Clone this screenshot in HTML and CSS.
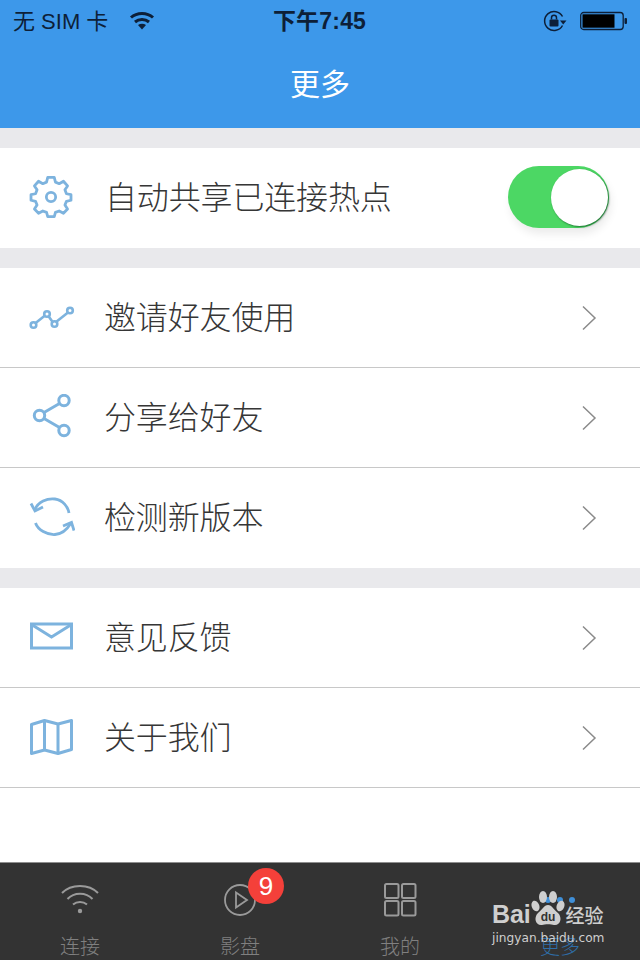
FILE: index.html
```html
<!DOCTYPE html>
<html lang="zh">
<head>
<meta charset="utf-8">
<title>更多</title>
<link rel="stylesheet" href="styles.css">
</head>
<body>
<div class="screen">
  <header class="header">
    <div class="status">
      <div class="status-left">
        <span>无 SIM 卡</span>
        <svg class="wifi-small" width="26" height="20" viewBox="0 0 26 20"><g fill="none" stroke="#0d1f38" stroke-width="3"><path d="M2 7.500C8 2 18 2 24 7.500"/><path d="M6 12C10 8.500 16 8.500 20 12"/></g><path d="M9 15C11.500 13.400 14.500 13.400 17 15L13 19.500Z" fill="#0d1f38"/></svg>
      </div>
      <div class="status-time">下午7:45</div>
      <div class="status-right">
        <svg width="24" height="24" viewBox="0 0 24 24"><path d="M19.500 7.500A9.500 9.500 0 1 0 19.500 16.500" fill="none" stroke="#0d1f38" stroke-width="1.500"/><path d="M17 11.500H23.500L20.200 15.500Z" fill="#0d1f38"/><rect x="6.500" y="10.500" width="9" height="7" rx="1" fill="#0d1f38"/><path d="M8.500 10.500V8.800a2.500 2.500 0 0 1 5 0V10.500" fill="none" stroke="#0d1f38" stroke-width="1.500"/></svg>
        <svg width="48" height="20" viewBox="0 0 48 20"><rect x=".7" y="1.500" width="42.500" height="17" rx="3" fill="none" stroke="#0d1f38" stroke-width="1.300"/><rect x="2.500" y="3.300" width="32" height="13.400" fill="#000"/><rect x="44.500" y="7" width="2.500" height="6" rx="1" fill="#0d1f38"/></svg>
      </div>
    </div>
    <h1 class="title">更多</h1>
  </header>

  <main class="content">
    <section class="group">
      <div class="row row-switch">
        <svg class="icon icon-up" width="48" height="48" viewBox="0 0 48 48"><g transform="translate(24 24) scale(.93) translate(-24 -24)" fill="none" stroke="#7db3de" stroke-width="3" stroke-linejoin="round"><path d="M20.500 3H27.500L28.800 8L32.800 9.700L37.400 7.100L41.800 12.100L39 16.300L40.600 20.500L45.500 21.500V27.500L40.600 28.700L39 32.700L41.800 37L37.400 41.500L32.800 39L28.800 40.500L27.500 45H20.500L19.200 40.500L15.200 39L10.600 41.500L6.200 37L9 32.700L7.400 28.700L2.500 27.500V21.500L7.400 20.500L9 16.300L6.200 12.100L10.600 7.100L15.200 9.700L19.200 8Z"/><circle cx="24" cy="24" r="5"/></g></svg>
        <span class="label label-first">自动共享已连接热点</span>
        <div class="switch"><div class="knob"></div></div>
      </div>
    </section>

    <section class="group">
      <div class="row">
        <svg class="icon" width="48" height="48" viewBox="0 0 48 48"><g fill="none" stroke="#7db3de" stroke-width="2.600"><path d="M8 29.500L18 21.500M21 21.500L26 28.500M29 28L41 18.500"/><circle cx="6.500" cy="31" r="2.800"/><circle cx="20" cy="20" r="2.800"/><circle cx="27.500" cy="30" r="2.800"/><circle cx="43" cy="16.500" r="2.800"/></g></svg>
        <span class="label">邀请好友使用</span>
        <svg class="chev" width="16" height="26" viewBox="0 0 16 26"><path d="M2 1.500L14 13L2 24.500" fill="none" stroke="#8a8a8a" stroke-width="1.500"/></svg>
      </div>
      <div class="row">
        <svg class="icon" width="48" height="48" viewBox="0 0 48 48"><g fill="none" stroke="#7db3de" stroke-width="3"><circle cx="37" cy="6.500" r="5.200"/><circle cx="12.500" cy="21.500" r="5.200"/><circle cx="37" cy="36.500" r="5.200"/><path d="M17 18.500L32.500 9.500M17 24.500L32.500 33.500"/></g></svg>
        <span class="label">分享给好友</span>
        <svg class="chev" width="16" height="26" viewBox="0 0 16 26"><path d="M2 1.500L14 13L2 24.500" fill="none" stroke="#8a8a8a" stroke-width="1.500"/></svg>
      </div>
      <div class="row">
        <svg class="icon" width="48" height="48" viewBox="0 0 48 48"><g fill="none" stroke="#7db3de" stroke-width="2.800"><path d="M8 15.500C11 8 20 4 28 5C36 6 41 13 42 19"/><path d="M4 9.500L8 17L16 13"/><path d="M8.500 29C11 36 20 41 28 40.500C36 40 41 34 44 29"/><path d="M47 36.500L44.500 28.500L36 32"/></g></svg>
        <span class="label">检测新版本</span>
        <svg class="chev" width="16" height="26" viewBox="0 0 16 26"><path d="M2 1.500L14 13L2 24.500" fill="none" stroke="#8a8a8a" stroke-width="1.500"/></svg>
      </div>
    </section>

    <section class="group">
      <div class="row">
        <svg class="icon" width="48" height="48" viewBox="0 0 48 48"><g fill="none" stroke="#7db3de" stroke-width="3"><rect x="4.500" y="10" width="40" height="24"/><path d="M4.500 10.500L24.500 23L44.500 10.500"/></g></svg>
        <span class="label">意见反馈</span>
        <svg class="chev" width="16" height="26" viewBox="0 0 16 26"><path d="M2 1.500L14 13L2 24.500" fill="none" stroke="#8a8a8a" stroke-width="1.500"/></svg>
      </div>
      <div class="row">
        <svg class="icon" width="48" height="48" viewBox="0 0 48 48"><g fill="none" stroke="#7db3de" stroke-width="3" stroke-linejoin="round"><path d="M4.500 10.500L17.500 6.500L31 10L44.500 6.500V35.500L31 39.500L17.500 36L4.500 39.500Z"/><path d="M17.500 6.500V36M31 10V39.500"/></g></svg>
        <span class="label">关于我们</span>
        <svg class="chev" width="16" height="26" viewBox="0 0 16 26"><path d="M2 1.500L14 13L2 24.500" fill="none" stroke="#8a8a8a" stroke-width="1.500"/></svg>
      </div>
    </section>
  </main>

  <nav class="tabbar">
    <div class="tab">
      <svg width="40" height="36" viewBox="0 0 40 36"><g fill="none" stroke="#9a9a9a" stroke-width="2"><path d="M2 11C11 1.500 29 1.500 38 11"/><path d="M7.500 17C14 10 26 10 32.500 17"/><path d="M13 22.500C17 19 23 19 27 22.500"/></g><circle cx="20" cy="29" r="2.200" fill="#9a9a9a"/></svg>
      <span>连接</span>
    </div>
    <div class="tab">
      <svg width="36" height="36" viewBox="0 0 36 36"><g fill="none" stroke="#9a9a9a" stroke-width="1.800"><circle cx="18" cy="18" r="15"/><path d="M14 10.500L25 18L14 25.500Z"/></g></svg>
      <span>影盘</span>
      <div class="badge">9</div>
    </div>
    <div class="tab">
      <svg width="36" height="36" viewBox="0 0 36 36"><g fill="none" stroke="#9a9a9a" stroke-width="2"><rect x="3" y="2" width="13.500" height="14" rx="1.500"/><rect x="20" y="2" width="13.500" height="14" rx="1.500"/><rect x="3" y="19" width="13.500" height="14.500" rx="1.500"/><rect x="20" y="19" width="13.500" height="14.500" rx="1.500"/></g></svg>
      <span>我的</span>
    </div>
    <div class="tab tab-active">
      <svg width="36" height="36" viewBox="0 0 36 36"><g fill="#3f8fd8"><circle cx="6" cy="18" r="3"/><circle cx="18" cy="18" r="3"/><circle cx="30" cy="18" r="3"/></g></svg>
      <span>更多</span>
    </div>
  </nav>

  <div class="watermark">
    <div class="wm-top">
      <span class="wm-bai">Bai</span>
      <svg width="34" height="36" viewBox="0 0 34 36"><g fill="#cfcfcf"><ellipse cx="4.500" cy="15" rx="3.800" ry="5.500" transform="rotate(-20 4.500 15)"/><ellipse cx="12" cy="6" rx="4" ry="6"/><ellipse cx="22" cy="6" rx="4" ry="6"/><ellipse cx="29.500" cy="15" rx="3.800" ry="5.500" transform="rotate(20 29.500 15)"/><path d="M17 14C21 14 23 19 27 22C32 27 29 35 23 34C20 33 14 33 11 34C5 35 2 27 7 22C11 19 13 14 17 14Z"/></g><text class="wm-du" x="17" y="30" text-anchor="middle">du</text></svg>
      <span class="wm-cn">经验</span>
    </div>
    <div class="wm-url">jingyan.baidu.com</div>
  </div>
</div>
</body>
</html>
```
FILE: styles.css
```css
* { box-sizing: border-box; }
html, body { margin: 0; padding: 0; }
body { font-family: "Noto Sans CJK SC", "Liberation Sans", sans-serif; background: #fff; }

.screen {
  position: relative;
  width: 640px;
  height: 960px;
  overflow: hidden;
  display: flex;
  flex-direction: column;
  background: #fff;
}

.header { height: 128px; background: #3d98ea; flex: none; }
.status {
  height: 40px;
  padding: 0 12px 2px 13px;
  display: grid;
  grid-template-columns: 1fr auto 1fr;
  align-items: center;
  color: #0d1f38;
  font-family: "Liberation Sans", "Noto Sans CJK SC", sans-serif;
  font-size: 22px;
}
.status-left { display: flex; align-items: center; gap: 25px; }
.wifi-small { margin-top: 1px; margin-left: -4px; }
.status-time { font-size: 23px; font-weight: 700; letter-spacing: .2px; margin-left: -2px; }
.status-right { display: flex; justify-content: flex-end; align-items: center; gap: 13px; margin-top: 4px; }
.title {
  margin: 0;
  height: 88px;
  padding-top: 18px;
  line-height: 48px;
  text-align: center;
  color: #fff;
  font-size: 30px;
  font-weight: 400;
}

.content { flex: 1; background: #fff; }
.group { border-top: 20px solid #e9e9ec; }
.row {
  height: 100px;
  display: flex;
  align-items: center;
  padding: 0 43px 0 27px;
  background: #fff;
  border-bottom: 1px solid #c8c8c8;
}
.row-switch { border-bottom: none; padding-right: 31px; }
.group:nth-child(2) .row:last-child { border-bottom: none; }
.icon { flex: none; }
.icon-up { margin-top: -2px; }
.label {
  flex: 1;
  margin-left: 29px;
  padding-bottom: 6px;
  font-size: 32px;
  letter-spacing: -.15px;
  color: #363636;
  font-weight: 300;
  line-height: 48px;
}
.label-first { margin-left: 30px; }
.chev { flex: none; }

.switch {
  flex: none;
  width: 101px;
  height: 62px;
  margin-top: -2px;
  border-radius: 31px;
  background: #4cd764;
  display: flex;
  justify-content: flex-end;
  align-items: center;
  box-shadow: 2px 6px 8px rgba(0,0,0,.08);
}
.knob {
  width: 57px;
  height: 57px;
  margin-right: 1px;
  border-radius: 50%;
  background: #fff;
  box-shadow: 1px 1px 2px rgba(0,60,20,.65);
}

.tabbar {
  flex: none;
  height: 98px;
  background: #333;
  border-top: 1px solid #8e8e8e;
  display: grid;
  grid-template-columns: repeat(4, 160px);
}
.tab {
  position: relative;
  padding-top: 19px;
  display: flex;
  flex-direction: column;
  align-items: center;
  color: #808080;
  font-size: 20px;
  font-weight: 300;
  line-height: 28px;
}
.tab span { margin-top: 14px; }
.tab-active { color: #2f6ea8; }
.badge {
  position: absolute;
  top: 5px;
  left: 88px;
  width: 36px;
  height: 36px;
  border-radius: 50%;
  background: #f4403a;
  color: #fff;
  font-family: "Liberation Sans", sans-serif;
  font-size: 26px;
  font-weight: 400;
  line-height: 36px;
  text-align: center;
}

.watermark {
  position: absolute;
  left: 492px;
  top: 891px;
  width: 120px;
  color: #cfcfcf;
}
.wm-top { display: flex; align-items: flex-end; height: 36px; }
.wm-bai { font-family: "Liberation Sans", sans-serif; font-weight: 700; font-size: 25px; line-height: 25px; letter-spacing: -.1px; }
.wm-du { font-family: "Liberation Sans", sans-serif; font-weight: 700; font-size: 12px; fill: #333; }
.wm-cn { font-size: 19px; line-height: 25px; font-weight: 500; margin-left: 1px; white-space: nowrap; }
.wm-url { font-family: "DejaVu Sans", sans-serif; font-size: 12.200px; line-height: 16px; margin-top: 3px; white-space: nowrap; }
```
